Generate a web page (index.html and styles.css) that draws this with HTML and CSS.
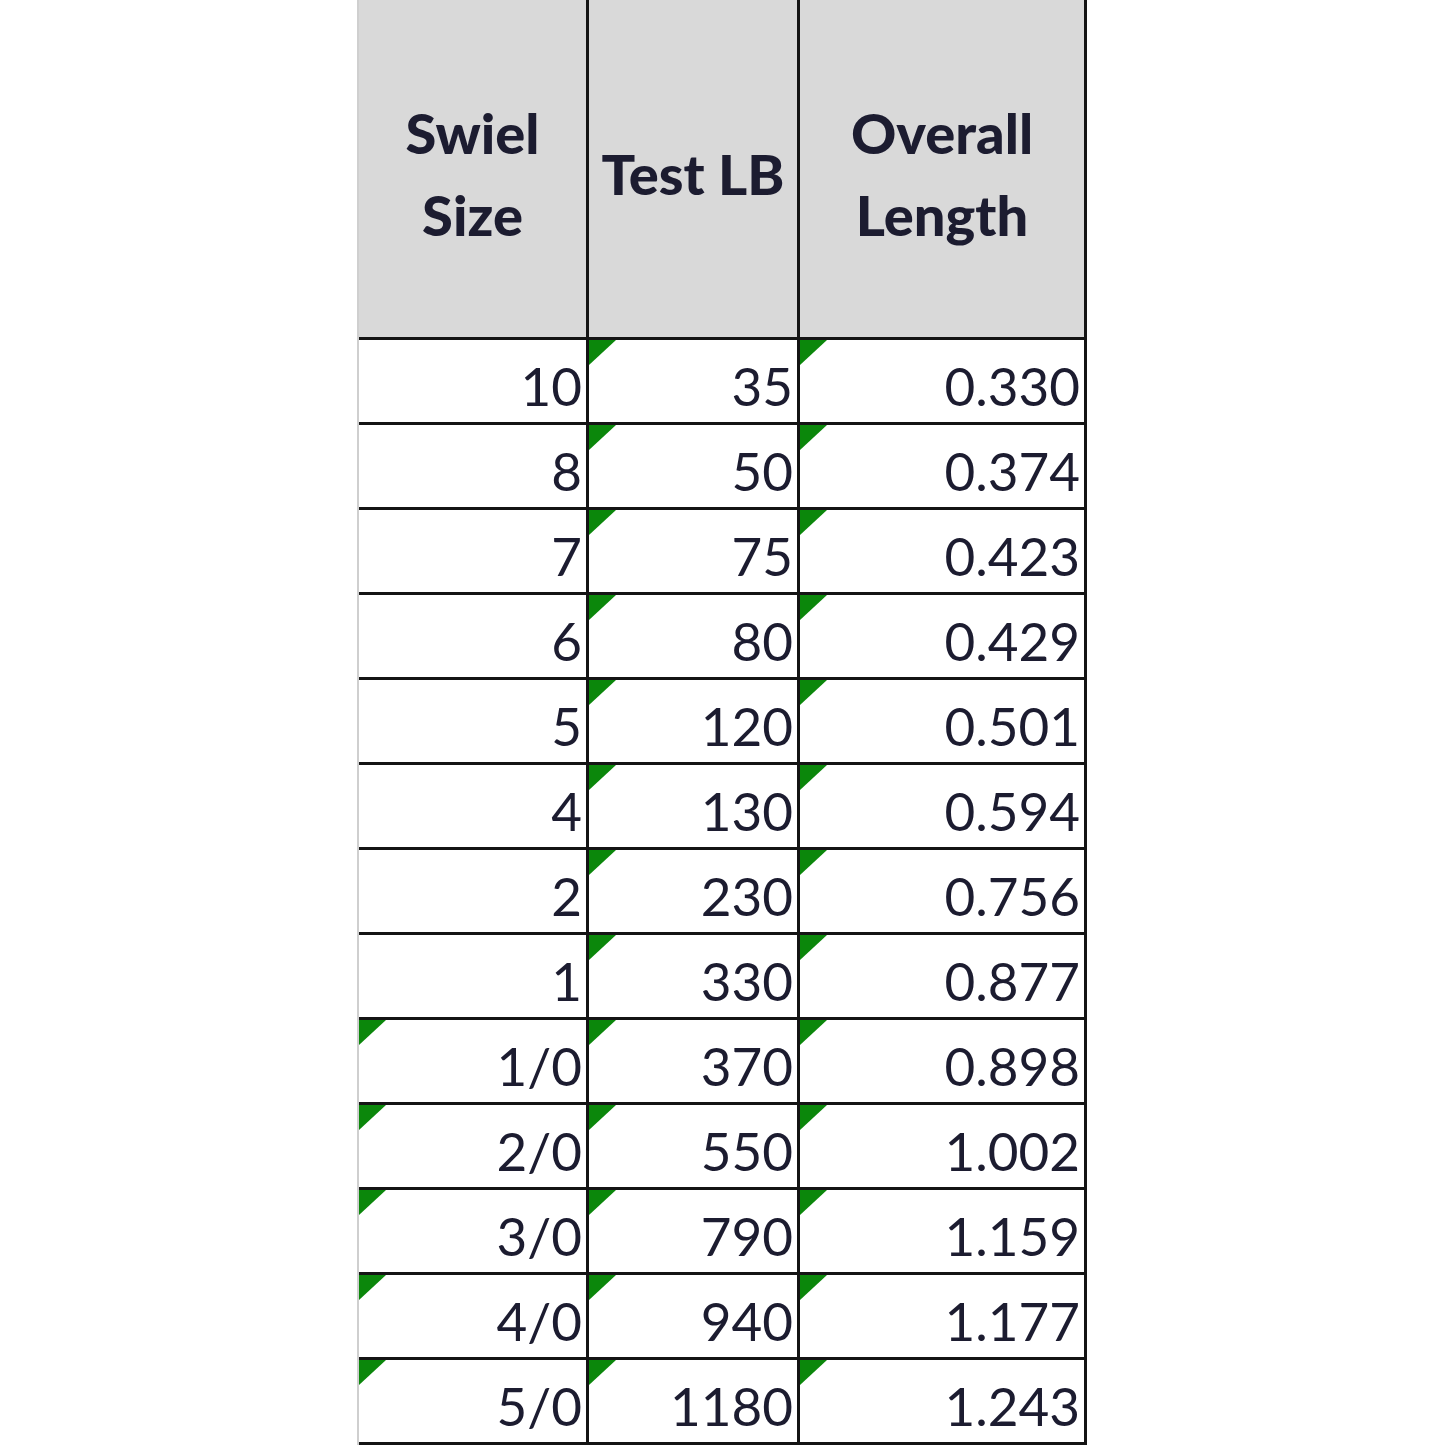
FILE: index.html
```html
<!DOCTYPE html>
<html>
<head>
<meta charset="utf-8">
<link rel="stylesheet" href="styles.css">
</head>
<body>
<div class="sheet">
  <div class="cell head">Swiel<br>Size</div>
  <div class="cell head">Test LB</div>
  <div class="cell head">Overall<br>Length</div>

  <div class="cell">10</div><div class="cell flag">35</div><div class="cell flag">0.330</div>
  <div class="cell">8</div><div class="cell flag">50</div><div class="cell flag">0.374</div>
  <div class="cell">7</div><div class="cell flag">75</div><div class="cell flag">0.423</div>
  <div class="cell">6</div><div class="cell flag">80</div><div class="cell flag">0.429</div>
  <div class="cell">5</div><div class="cell flag">120</div><div class="cell flag">0.501</div>
  <div class="cell">4</div><div class="cell flag">130</div><div class="cell flag">0.594</div>
  <div class="cell">2</div><div class="cell flag">230</div><div class="cell flag">0.756</div>
  <div class="cell">1</div><div class="cell flag">330</div><div class="cell flag">0.877</div>
  <div class="cell flag">1/0</div><div class="cell flag">370</div><div class="cell flag">0.898</div>
  <div class="cell flag">2/0</div><div class="cell flag">550</div><div class="cell flag">1.002</div>
  <div class="cell flag">3/0</div><div class="cell flag">790</div><div class="cell flag">1.159</div>
  <div class="cell flag">4/0</div><div class="cell flag">940</div><div class="cell flag">1.177</div>
  <div class="cell flag">5/0</div><div class="cell flag">1180</div><div class="cell flag">1.243</div>
</div>
</body>
</html>
```
FILE: styles.css
```css
html, body {
  margin: 0;
  padding: 0;
  background: #ffffff;
}

.sheet {
  display: grid;
  grid-template-columns: 230px 211px 287px;
  grid-template-rows: 340px;
  grid-auto-rows: 85px;
  width: fit-content;
  margin-left: 357px;
  border-left: 2px solid #cfcfcf;
  font-family: Lato, "Liberation Sans", sans-serif;
  color: #1c1c30;
}

.cell {
  position: relative;
  box-sizing: border-box;
  border-right: 3px solid #141414;
  border-bottom: 3px solid #141414;
  display: flex;
  align-items: center;
  justify-content: flex-end;
  padding: 8px 4px 0 0;
  font-size: 53px;
  line-height: 1;
  background: #ffffff;
}

.head {
  background: #d9d9d9;
  justify-content: center;
  text-align: center;
  font-weight: 900;
  font-size: 56px;
  line-height: 82px;
  padding: 10px 0 0 0;
}

.flag::before {
  content: "";
  position: absolute;
  top: 0;
  left: 0;
  width: 0;
  height: 0;
  border-top: 25px solid #0b870b;
  border-right: 27px solid transparent;
}
```
